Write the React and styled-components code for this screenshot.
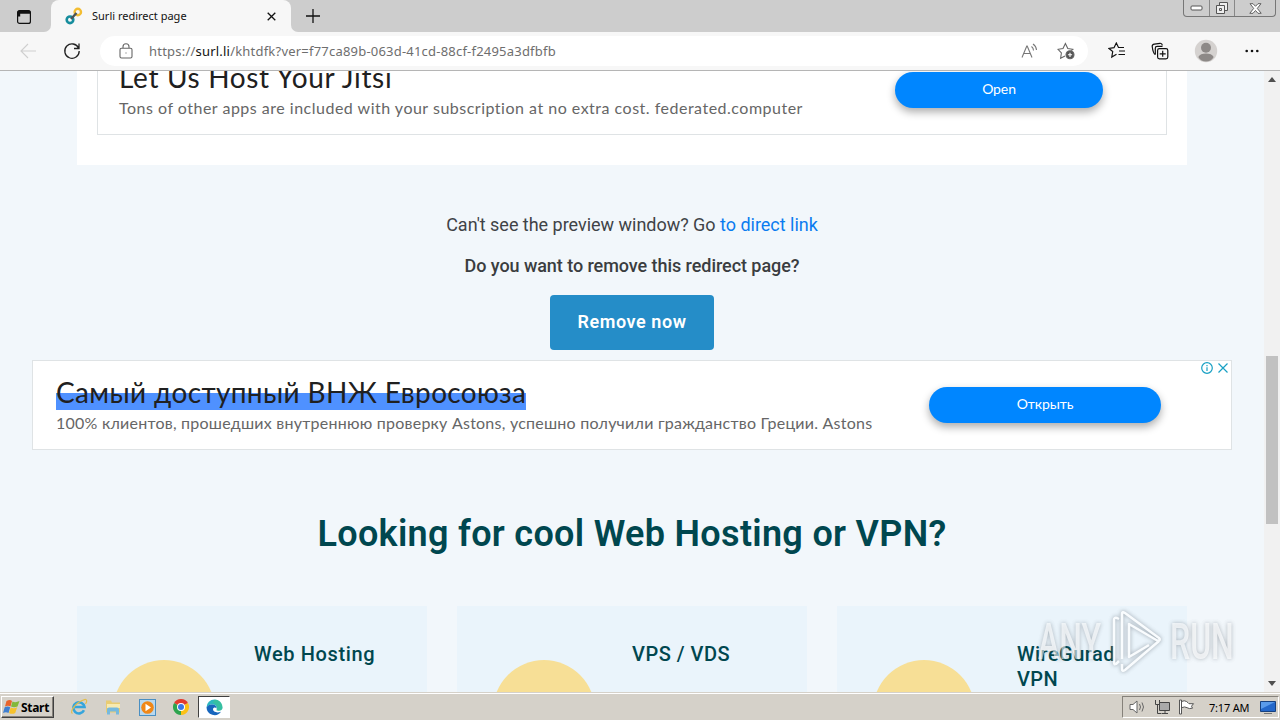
import styled, { createGlobalStyle } from "styled-components";

const GlobalStyle = createGlobalStyle`
    * {
        box-sizing: border-box;
    }
    body {
        margin: 0;
        overflow: hidden;
    }
    h1, h2, h3, p {
        margin: 0;
    }
`;

const colors = {
    page: "#f2f7fb",
    card: "#eaf4fb",
    dark: "#00474f",
    ad: "#0086ff",
    sun: "#f7df96",
    taskbar: "#d5d1c9",
};

const AdCard = ({ top, title, text, button, highlight, ...sizes }) => (
    <AdBox $top={top}>
        <AdTexts $left={sizes.left} $top={top}>
            <AdTitle $spacing={sizes.titleSpacing} $highlight={highlight}>
                {title}
            </AdTitle>
            <AdText $spacing={sizes.textSpacing}>{text}</AdText>
        </AdTexts>
        <AdButton $width={sizes.buttonWidth} $right={sizes.right} $top={top}>
            {button}
        </AdButton>
        {highlight && (
            <AdMarks width="28" height="14" viewBox="0 0 28 14">
                <circle cx="6" cy="7" r="5.3" />
                <path d="M6 6.2V10M6 4v1.2M17.5 2.5l9 9M26.5 2.5l-9 9" />
            </AdMarks>
        )}
    </AdBox>
);

const hostings = [
    { name: "Web Hosting", left: 177, spacing: 0.62 },
    { name: "VPS / VDS", left: 175, spacing: 0.5 },
    { name: "WireGurad VPN", left: 180, spacing: 0.45 },
];

const App = () => (
    <Screen>
        <GlobalStyle />
        <TabBar>
            <TabActions>
                <svg width="16" height="16" viewBox="0 0 16 16">
                    <rect x="1.6" y="1.6" width="12.8" height="12.8" rx="2" fill="none" stroke="#111" strokeWidth="1.2" />
                    <path d="M1.5 3q0-1.500 1.500-1.500h10q1.500 0 1.500 1.500v1.800h-13zM1.500 4.500h2.700v3H1.500z" fill="#111" />
                </svg>
            </TabActions>
            <Tab>
                <svg width="18" height="18" viewBox="0 0 18 18" fill="none">
                    <circle cx="12.8" cy="5" r="3.2" stroke="#f3bd32" strokeWidth="2.4" />
                    <circle cx="5" cy="12.8" r="3.3" stroke="#168d9d" strokeWidth="2.6" />
                    <path d="M6 12l5.500-6" stroke="#4b5358" strokeWidth="2.4" />
                </svg>
                <TabTitle>Surli redirect page</TabTitle>
                <svg width="9" height="9" viewBox="0 0 9 9" stroke="#111" strokeWidth="1.3">
                    <path d="M.7.7l7.6 7.6M8.3.7L.7 8.3" />
                </svg>
            </Tab>
            <NewTab width="14" height="14" viewBox="0 0 14 14">
                <path d="M7 0v14M0 7h14" />
            </NewTab>
            <WindowButtons>
                <WindowButton $width={25}>
                    <svg width="13" height="6" viewBox="0 0 13 6">
                        <rect x="1" y="1" width="11" height="4" rx="1" fill="#fff" stroke="#555" />
                    </svg>
                </WindowButton>
                <WindowButton $width={25}>
                    <svg width="14" height="14" viewBox="0 0 14 14" fill="#eee" stroke="#555">
                        <path d="M4.5 1.5h8v8h-8z" />
                        <path d="M1.5 4.5h8v8h-8z" />
                        <path d="M4.5 7.5h2v2h-2z" />
                    </svg>
                </WindowButton>
                <WindowButton $width={41}>
                    <svg width="13" height="11" viewBox="0 0 13 11">
                        <path d="M1 .7h3l2.5 2.6L9 .7h3L8.3 5.4l3.9 4.9H9L6.5 7.5 4 10.3H.8l3.9-4.9z" fill="#fff" stroke="#555" strokeWidth=".9" />
                    </svg>
                </WindowButton>
            </WindowButtons>
        </TabBar>

        <Toolbar>
            <ToolIcon $left={20} width="17" height="16" viewBox="0 0 17 16" $color="#cfcfcf">
                <path d="M16 8H1M8 1L1 8l7 7" />
            </ToolIcon>
            <ToolIcon $left={26} width="18" height="18" viewBox="0 0 18 18" $color="#222" $stroke={1.3}>
                <path d="M15.6 6.2A7.2 7.2 0 1 0 16.2 9M16 1.5v5h-5" />
            </ToolIcon>
            <AddressBar>
                <ToolIcon $left={19} width="14" height="16" viewBox="0 0 14 16" $color="#666">
                    <rect x="1" y="5.2" width="12" height="9.8" rx="1.5" />
                    <path d="M4 5V3.8a3 3 0 0 1 6 0V5M6.5 10h1" />
                </ToolIcon>
                <Url>
                    https://<b>surl.li</b>/khtdfk?ver=f77ca89b-063d-41cd-88cf-f2495a3dfbfb
                </Url>
                <ToolIcon width="17" height="16" viewBox="0 0 17 16" $color="#777">
                    <path d="M1 14.5L5.8 3h.4L11 14.5M2.8 10.5h6.4M10.5 3.5a5 5 0 0 1 2 4M12 1a8 8 0 0 1 3.5 6" />
                </ToolIcon>
                <ToolIcon $left={19} width="18" height="18" viewBox="0 0 18 18" $color="#666">
                    <path d="M8 14l-4.4 2.2.8-5.2L1 7.3l5-.8 2.4-5 2.4 5 5 .8-1.5 1.3" />
                    <circle cx="13" cy="12.8" r="4" fill="#555" />
                    <path d="M13 10.7v4.2M10.9 12.8h4.2" stroke="#fff" />
                </ToolIcon>
            </AddressBar>
            <ToolIcon $left={20} width="18" height="18" viewBox="0 0 18 18" $color="#111" $stroke={1.2}>
                <path d="M8.5 12.2L3.8 15l.9-5.4L1 6.5l5-.8L8.3 1l2.2 4.5H16M11 9h6M10.5 12.5H17" />
            </ToolIcon>
            <ToolIcon $left={25} width="18" height="18" viewBox="0 0 18 18" $color="#111" $stroke={1.2}>
                <path d="M4.3 12.5C2.5 11.5 1.5 7 1.2 4.5 1.1 3 2 2.4 3.4 2.2L9 1.3c1.4-.2 2.1.6 2.4 2" />
                <path d="M4.300 12.500V6.200c0-1.200.7-1.800 1.800-1.800h5.400" />
                <rect x="6.6" y="6.6" width="10.2" height="10.2" rx="1.8" />
                <path d="M11.700 8.800v6M8.700 11.800h6" />
            </ToolIcon>
            <ToolIcon $left={25} width="24" height="24" viewBox="0 0 24 24" $color="none">
                <circle cx="12" cy="12" r="11.2" fill="#d5d2d0" />
                <circle cx="12" cy="8.8" r="5" fill="#8d8987" />
                <path d="M4.3 18c2-4.6 13.4-4.6 15.4 0-3 6-12.4 6-15.4 0z" fill="#8d8987" />
            </ToolIcon>
            <ToolIcon $left={27} width="14" height="4" viewBox="0 0 14 4" $color="none">
                <g fill="#111">
                    <circle cx="1.7" cy="2" r="1.3" />
                    <circle cx="7" cy="2" r="1.3" />
                    <circle cx="12.3" cy="2" r="1.3" />
                </g>
            </ToolIcon>
        </Toolbar>

        <Viewport>
            <Page>
                <Preview>
                    <AdCard
                        top
                        title="Let Us Host Your Jitsi"
                        text="Tons of other apps are included with your subscription at no extra cost. federated.computer"
                        button="Open"
                        left={21}
                        right={63}
                        buttonWidth={208}
                        titleSpacing={0.67}
                        textSpacing={0.5}
                    />
                </Preview>
                <Hint>
                    Can't see the preview window? Go <a>to direct link</a>
                </Hint>
                <Question>Do you want to remove this redirect page?</Question>
                <RemoveButton>Remove now</RemoveButton>
                <Banner>
                    <AdCard
                        title="Самый доступный ВНЖ Евросоюза"
                        text="100% клиентов, прошедших внутреннюю проверку Astons, успешно получили гражданство Греции. Astons"
                        button="Открыть"
                        highlight
                        left={23}
                        right={70}
                        buttonWidth={232}
                        titleSpacing={0.36}
                        textSpacing={0.235}
                    />
                </Banner>
                <Heading>Looking for cool Web Hosting or VPN?</Heading>
                <Hostings>
                    {hostings.map((item) => (
                        <Hosting key={item.name}>
                            <Sun />
                            <HostingName $left={item.left} $spacing={item.spacing}>
                                {item.name}
                            </HostingName>
                        </Hosting>
                    ))}
                </Hostings>
            </Page>
            <Scrollbar>
                <Arrow viewBox="0 0 8 5">
                    <path d="M0 5l4-5 4 5z" />
                </Arrow>
                <Thumb />
                <Arrow viewBox="0 0 8 5">
                    <path d="M0 0l4 5 4-5z" />
                </Arrow>
            </Scrollbar>
        </Viewport>

        <Taskbar>
            <Start>
                <svg width="17" height="16" viewBox="0 0 17 16">
                    <path d="M3.5 2Q7 0 9 2L7.5 7.5Q5 6 2 7.5z" fill="#e8642c" />
                    <path d="M9.5 2.5q3 1.5 7-.5l-2 5.500Q11 9 8 7.500z" fill="#83b83a" />
                    <path d="M1.700 8.200q3-1.500 5.500 0l-1.700 5.800Q3 12.300 0 14z" fill="#3f7fd0" />
                    <path d="M7.700 8.500q3 1.500 6.500-.2l-2 5.700q-3 1.700-6.200 0z" fill="#f6c22d" />
                </svg>
                Start
            </Start>
            <QuickItem $width={34}>
                <svg width="18" height="18" viewBox="0 0 18 18" fill="none">
                    <path d="M14 12.3A5.6 5.6 0 1 1 14.5 9H5" stroke="#35a5dc" strokeWidth="2.6" />
                    <path d="M2.500 15.500C-1 14 6 4 14.500 1.600 17.500.8 17 4 15.500 6" stroke="#e2bd4c" strokeWidth="1.2" />
                </svg>
            </QuickItem>
            <QuickItem $width={34}>
                <svg width="16" height="16" viewBox="0 0 16 16">
                    <path d="M1 1.500h5l1 2h8v10H1z" fill="#e9cc72" />
                    <path d="M2 5h13v4H2z" fill="#f8eab0" />
                    <path d="M2 15.500v-5q0-2 2-2h8q2 0 2 2v5h-3v-3H5v3z" fill="#76b9de" />
                </svg>
            </QuickItem>
            <QuickItem $width={34}>
                <svg width="17" height="17" viewBox="0 0 17 17">
                    <rect x=".5" y=".5" width="16" height="16" fill="#b8d8ef" stroke="#4a8fc2" />
                    <circle cx="8.5" cy="8.5" r="6.3" fill="#f08717" />
                    <path d="M6.5 4.800v7.400l5.500-3.700z" fill="#fff" />
                </svg>
            </QuickItem>
            <QuickItem $width={34}>
                <svg width="16" height="16" viewBox="0 0 16 16">
                    <path d="M8 8L1.070 4A8 8 0 0 1 14.930 4z" fill="#e33b2e" />
                    <path d="M8 8l6.930-4A8 8 0 0 1 8 16z" fill="#fbc116" />
                    <path d="M8 8v8A8 8 0 0 1 1.070 4z" fill="#2da44e" />
                    <circle cx="8" cy="8" r="4" fill="#fff" />
                    <circle cx="8" cy="8" r="3" fill="#3b78e7" />
                </svg>
            </QuickItem>
            <QuickItem $width={32} $active>
                <svg width="17" height="17" viewBox="0 0 17 17">
                    <path d="M.5 8.5a8 8 0 0 1 16 0c0 3-3.5 3.8-6 2.8C11.5 9 10.5 6 7 5.5 4 5 1.5 6.5.5 8.5z" fill="#2cb7c0" />
                    <path d="M9 .5a8 8 0 0 1 7.5 8c0 3-3.5 3.8-6 2.8C12 9 11 5 6.5 3.5z" fill="#43c97c" opacity=".45" />
                    <path d="M.5 8.500C1.500 6 4.500 5 7 5.500c3 .6 3.800 2.500 3.500 4-.8-1.500-3-1.500-3.500.5-.4 2.500 3.500 4.500 8 2.700A8 8 0 0 1 .5 8.500z" fill="#1766bd" />
                </svg>
            </QuickItem>
            <Tray>
                <svg width="18" height="16" viewBox="0 0 18 16" fill="#fff" stroke="#666">
                    <path d="M1 5.500h3L8 2v12l-4-3.500H1z" />
                    <path d="M10.5 5q2 3 0 6M13 3.5q3 4.5 0 9" fill="none" />
                </svg>
                <svg width="17" height="16" viewBox="0 0 17 16" fill="#fff" stroke="#444">
                    <path d="M5.500 3.500h10v8h-10z" fill="#aaa" />
                    <path d="M8 14.500h6M11 12v2" />
                    <path d="M1.500 1v4.500h4V1M3.500 5.500v9h4" fill="none" />
                </svg>
                <svg width="17" height="16" viewBox="0 0 17 16" fill="#fff" stroke="#555">
                    <path d="M3.500 2.500q3-1.500 5 0t2.500 2.200h4.500l-2 2.500 1 2q-3.500 1-5.500-.5t-5.500 0zM1.500 1h2v14h-2z" />
                </svg>
                <Clock>7:17 AM</Clock>
                <svg width="16" height="15" viewBox="0 0 16 15">
                    <path d="M.5 1.500h15v10H.5z" fill="#2468ca" stroke="#17417f" />
                    <path d="M1 2h14L1 9z" fill="#5a9bea" />
                    <path d="M4 13.500h8" stroke="#777" />
                </svg>
            </Tray>
        </Taskbar>

        <Watermark>
            <MarkWord>ANY</MarkWord>
            <svg width="58" height="66" viewBox="0 0 58 66">
                <path d="M12 52l-3 3q-2 1-2-2V11q0-3 3-2l2 1" />
                <path d="M15 50V5q0-3 3-1l34 25q2 2-1 3L22 15v33l20-12" />
                <path d="M52 32L18 61q-3 2-3-1v-5" />
            </svg>
            <MarkWord>RUN</MarkWord>
        </Watermark>
    </Screen>
);

const Screen = styled.div`
    position: relative;
    width: 1280px;
    height: 720px;
    display: flex;
    flex-direction: column;
    overflow: hidden;
    font-family: "Open Sans", sans-serif;

    svg {
        flex: none;
    }
`;

const TabBar = styled.div`
    height: 32px;
    display: flex;
    background: linear-gradient(to right, #f7f7f7 310px, #cdcdcd 310px);
`;

const TabActions = styled.div`
    width: 51px;
    padding: 8px 0 0 16px;
    border-radius: 0 0 7px 0;
    background: #cdcdcd;
`;

const Tab = styled.div`
    position: relative;
    width: 240px;
    display: flex;
    align-items: center;
    padding: 0 15px 0 14px;
    background: linear-gradient(#cdcdcd 50%, #f7f7f7 50%);

    &::before {
        content: "";
        position: absolute;
        inset: 0;
        background: #f7f7f7;
        border-radius: 8px 8px 0 0;
    }

    > * {
        position: relative;
    }
`;

const TabTitle = styled.span`
    flex: 1;
    margin: -1px 0 0 9px;
    font-family: "Noto Sans", sans-serif;
    font-size: 11px;
    color: #111;
`;

const NewTab = styled.svg`
    width: 40px;
    height: 32px;
    padding: 9px 11px 9px 15px;
    background: #cdcdcd;
    border-radius: 0 0 0 7px;
    stroke: #111;
    stroke-width: 1.3;
`;

const WindowButtons = styled.div`
    display: flex;
    height: 17px;
    margin: 0 4px 0 auto;
    border: 1px solid #777;
    border-top: 0;
    border-radius: 0 0 4px 4px;
`;

const WindowButton = styled.div`
    width: ${({ $width }) => $width}px;
    display: flex;
    align-items: center;
    justify-content: center;

    & + & {
        border-left: 1px solid #888;
    }
`;

const Toolbar = styled.div`
    height: 39px;
    display: flex;
    align-items: center;
    background: #f7f7f7;
    border-bottom: 1px solid #b5b5b5;
`;

const ToolIcon = styled.svg`
    margin-left: ${({ $left }) => $left || 0}px;
    fill: none;
    stroke: ${({ $color }) => $color};
    stroke-width: ${({ $stroke }) => $stroke || 1.1};
`;

const AddressBar = styled.div`
    width: 988px;
    height: 30px;
    margin-left: 19px;
    padding-right: 13px;
    display: flex;
    align-items: center;
    background: #fff;
    border-radius: 15px;
`;

const Url = styled.span`
    flex: 1;
    margin-left: 16px;
    font-family: "Noto Sans", sans-serif;
    font-size: 13px;
    letter-spacing: 0.21px;
    color: #6e6e6e;

    b {
        font-weight: 400;
        color: #111;
    }
`;

const Viewport = styled.div`
    height: 621px;
    display: flex;
    overflow: hidden;
    background: ${colors.page};
`;

const Page = styled.div`
    width: 1264px;
    display: flex;
    flex-direction: column;
    align-items: center;
`;

const Preview = styled.div`
    width: 1110px;
    height: 94px;
    flex: none;
    padding: 0 20px;
    background: #fff;
`;

const AdBox = styled.div`
    position: relative;
    height: ${({ $top }) => ($top ? 64 : 90)}px;
    display: flex;
    justify-content: space-between;
    background: #fff;
    border: 1px solid #dfe3e5;
    border-top-width: ${({ $top }) => ($top ? 0 : 1)}px;
    font-family: Lato, sans-serif;
    white-space: nowrap;
`;

const AdTexts = styled.div`
    margin-top: ${({ $top }) => ($top ? -11 : 14)}px;
    margin-left: ${({ $left }) => $left}px;
`;

const AdTitle = styled.h2`
    width: max-content;
    height: 35px;
    font-size: 28px;
    line-height: 35px;
    font-weight: 400;
    letter-spacing: ${({ $spacing }) => $spacing}px;
    color: #202020;
    background: ${({ $highlight }) =>
        $highlight ? "linear-gradient(transparent 18px, #4f91ff 18px)" : "none"};
`;

const AdText = styled.p`
    margin-top: 3px;
    font-size: 16px;
    line-height: 20px;
    letter-spacing: ${({ $spacing }) => $spacing}px;
    color: #666;
`;

const AdButton = styled.div`
    width: ${({ $width }) => $width}px;
    height: 36px;
    margin: ${({ $top }) => ($top ? 1 : 26)}px ${({ $right }) => $right}px 0 0;
    border-radius: 18px;
    background: ${colors.ad};
    box-shadow: 0 4px 9px rgba(0, 0, 0, 0.33);
    color: #fff;
    font-size: 14px;
    font-weight: 400;
    line-height: 34px;
    letter-spacing: -0.1px;
    text-align: center;
`;

const AdMarks = styled.svg`
    position: absolute;
    top: 0;
    right: 2px;
    fill: none;
    stroke: #18a0c4;
    stroke-width: 1.2;
`;

const Hint = styled.p`
    margin-top: 46px;
    font: 18px/28px Roboto, sans-serif;
    letter-spacing: -0.02px;
    color: #3f4347;

    a {
        color: #0a7cf0;
    }
`;

const Question = styled.p`
    margin-top: 13px;
    font: 500 18px/28px Roboto, sans-serif;
    letter-spacing: -0.06px;
    color: #3a3d40;
`;

const RemoveButton = styled.div`
    width: 164px;
    height: 55px;
    flex: none;
    margin-top: 15px;
    border-radius: 4px;
    background: #258dc8;
    color: #fff;
    font: 600 18px/54px Roboto, sans-serif;
    letter-spacing: 0.56px;
    text-align: center;
`;

const Banner = styled.div`
    width: 1200px;
    margin-top: 10px;
`;

const Heading = styled.h1`
    margin-top: 61px;
    font: 600 36px/46px Roboto, sans-serif;
    letter-spacing: 0.31px;
    color: ${colors.dark};
`;

const Hostings = styled.div`
    margin-top: 49px;
    display: flex;
    gap: 30px;
`;

const Hosting = styled.div`
    position: relative;
    width: 350px;
    height: 120px;
    background: ${colors.card};
`;

const Sun = styled.div`
    position: absolute;
    top: 54px;
    left: 36px;
    width: 102px;
    height: 102px;
    border-radius: 50%;
    background: ${colors.sun};
`;

const HostingName = styled.h3`
    width: 130px;
    margin: 36px 0 0 ${({ $left }) => $left}px;
    font: 500 20px/25px Roboto, sans-serif;
    letter-spacing: ${({ $spacing }) => $spacing}px;
    color: ${colors.dark};
`;

const Scrollbar = styled.div`
    width: 16px;
    display: flex;
    flex-direction: column;
    align-items: center;
    justify-content: space-between;
    padding: 6px 0;
    background: #f1f1f1;
`;

const Arrow = styled.svg`
    width: 8px;
    height: 5px;
    fill: #505050;
`;

const Thumb = styled.div`
    width: 12px;
    height: 168px;
    margin-top: 116px;
    background: #c1c1c1;
`;

const Taskbar = styled.div`
    height: 28px;
    display: flex;
    align-items: center;
    padding: 1px 1px 0;
    background: ${colors.taskbar};
    border-top: 1px solid #d5d1c9;
    box-shadow: inset 0 1px #fff;
`;

const Start = styled.div`
    width: 53px;
    height: 22px;
    margin-right: 8px;
    display: flex;
    align-items: center;
    gap: 1px;
    padding-left: 1px;
    border: 1px solid;
    border-color: #fff #404040 #404040 #fff;
    box-shadow: inset -1px -1px #85817a;
    color: #000;
    font: 700 12px "Noto Sans", sans-serif;
    letter-spacing: -0.3px;
`;

const QuickItem = styled.div`
    width: ${({ $width }) => $width}px;
    height: 22px;
    display: flex;
    align-items: center;
    justify-content: center;
    background: ${({ $active }) => ($active ? "#fff" : "none")};
    border: ${({ $active }) => ($active ? "1px solid" : "0")};
    border-color: #404040 #fff #fff #404040;
`;

const Tray = styled.div`
    width: 157px;
    height: 22px;
    margin-left: auto;
    display: flex;
    align-items: center;
    gap: 7px;
    padding-left: 6px;
    border: 1px solid;
    border-color: #85817a #fff #fff #85817a;
`;

const Clock = styled.span`
    margin-left: 7px;
    width: 44px;
    white-space: nowrap;
    font: 11px "Noto Sans", sans-serif;
    letter-spacing: -0.2px;
    color: #000;
`;

const Watermark = styled.div`
    position: absolute;
    left: 1038px;
    top: 606px;
    display: flex;
    align-items: center;
    opacity: 0.75;
    filter: drop-shadow(0 0 2px rgba(80, 90, 100, 0.75));

    svg {
        width: 58px;
        margin: 0 5px;
        fill: none;
        stroke: #fff;
        stroke-width: 2.5;
        stroke-linejoin: round;
    }
`;

const MarkWord = styled.span`
    width: 64px;
    font: 500 50px/72px Roboto, sans-serif;
    white-space: nowrap;
    transform: scaleX(0.64);
    transform-origin: left;
    color: rgba(255, 255, 255, 0.75);
`;

export default App;
